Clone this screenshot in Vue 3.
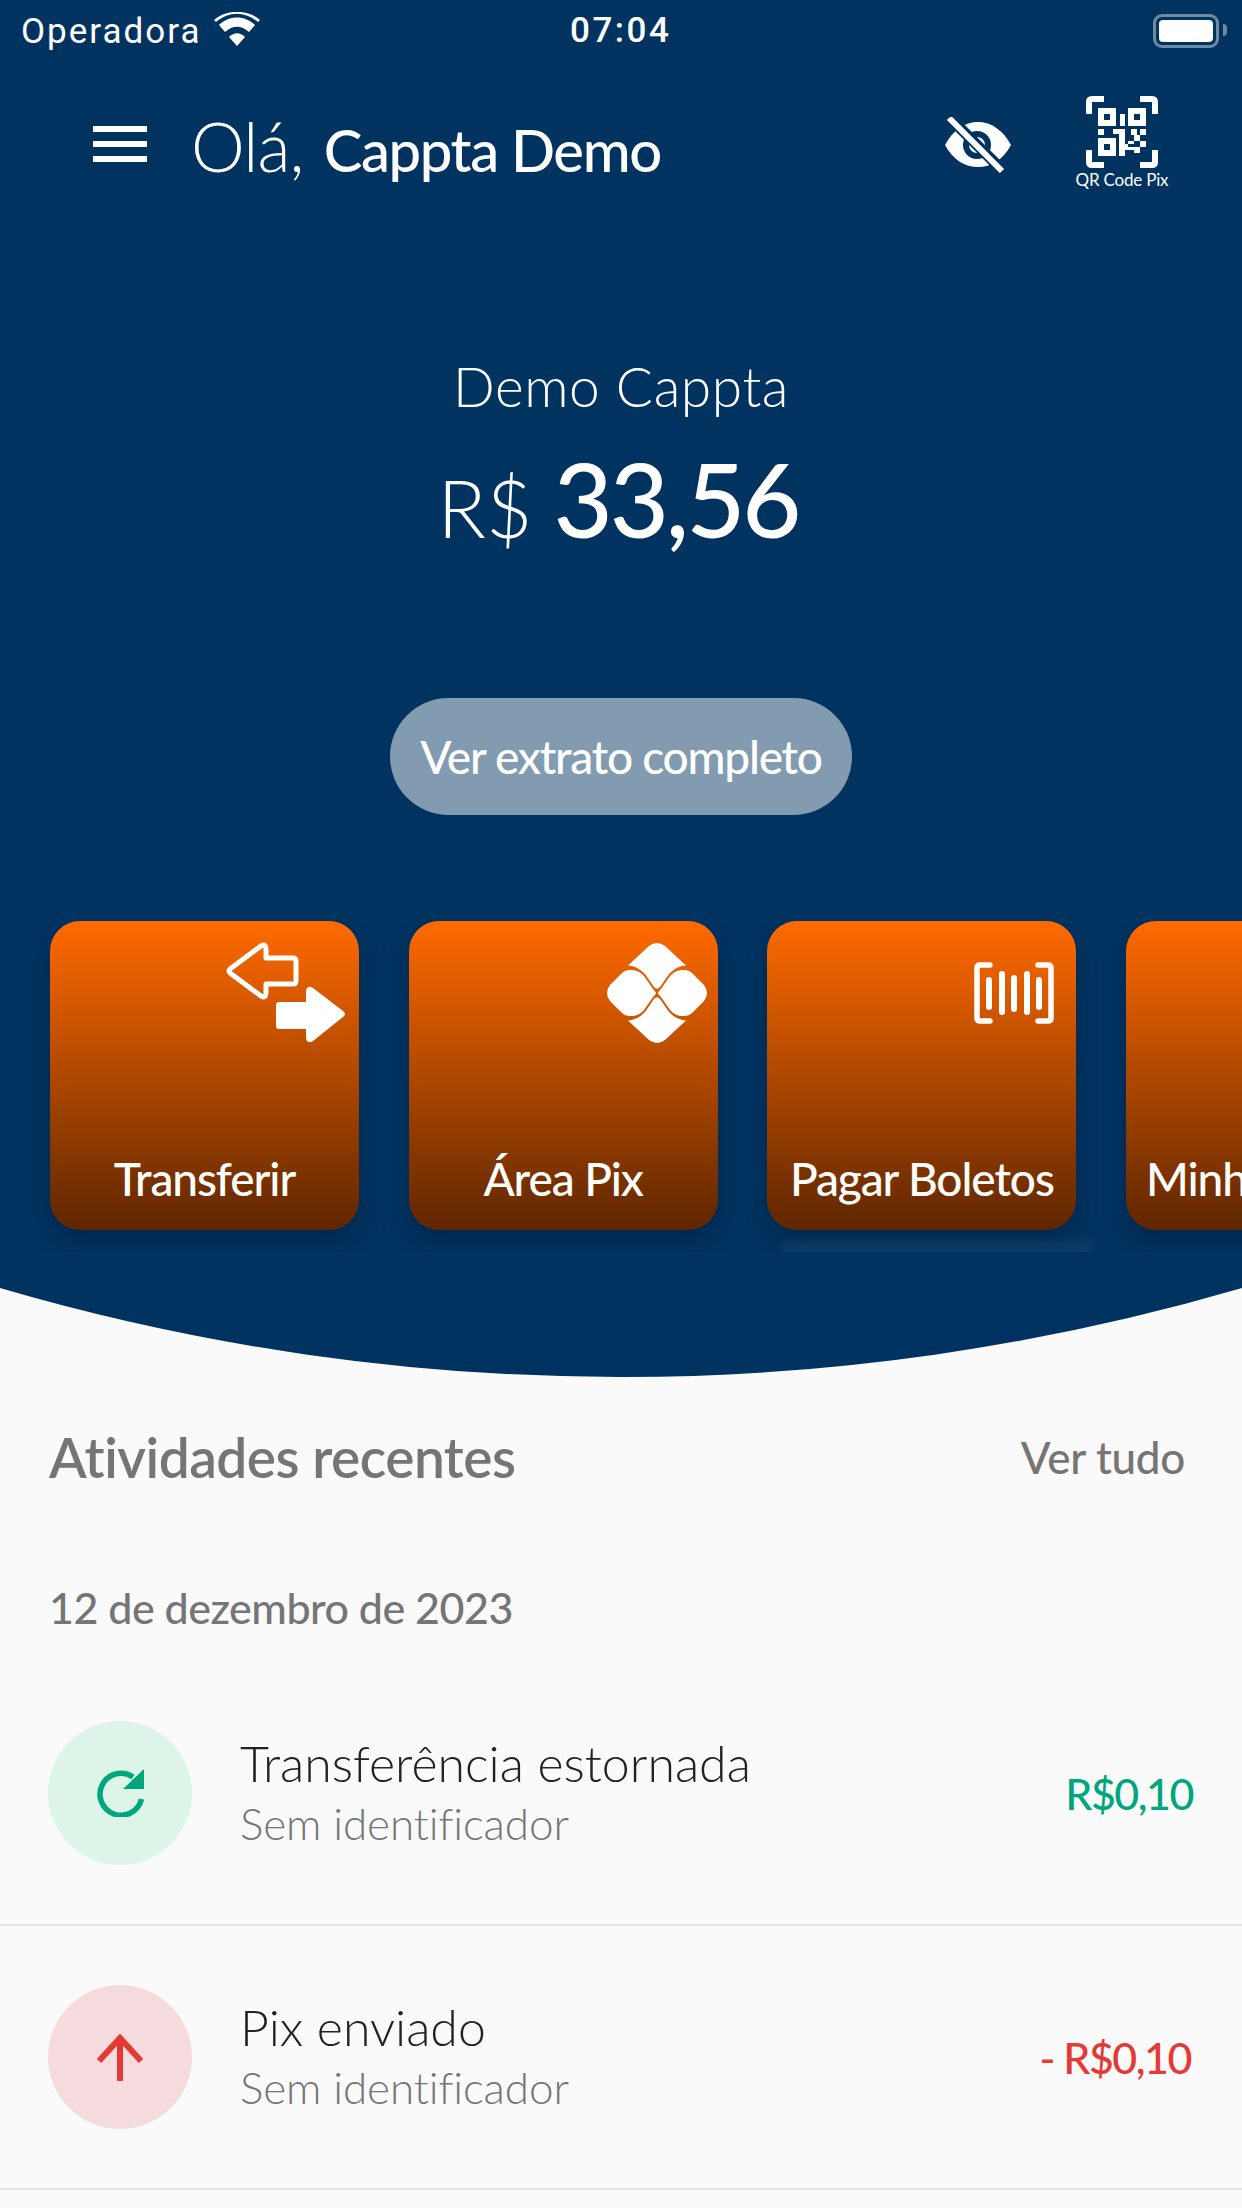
<script setup>
const cards = [
  { label: 'Transferir', icon: 'transfer' },
  { label: 'Área Pix', icon: 'pix' },
  { label: 'Pagar Boletos', icon: 'barcode' },
  { label: 'Minhas Chaves', icon: 'none' }
]
const rows = [
  { title: 'Transferência estornada', sub: 'Sem identificador', amount: 'R$0,10', kind: 'in' },
  { title: 'Pix enviado', sub: 'Sem identificador', amount: '- R$0,10', kind: 'out' }
]
</script>

<template>
  <div class="page">
    <section class="hero">
      <div class="status">
        <div class="status-left">
          <span>Operadora</span>
          <svg class="wifi" viewBox="0 0 46 34" width="46" height="34">
            <path fill="#fff" d="M23 34 15 25C20 20 26 20 31 25ZM11 20 5 13C15 3 31 3 41 13L35 20C27 13 19 13 11 20ZM2 10 0 8C12-3 34-3 46 8L44 10C31-1 15-1 2 10Z"/>
          </svg>
        </div>
        <span class="clock">07:04</span>
        <div class="battery"><i class="battery-fill"></i><b class="battery-tip"></b></div>
      </div>

      <header class="top">
        <div class="burger"><i></i><i></i><i></i></div>
        <div class="hello"><span class="hi">Olá,</span><span class="name">Cappta Demo</span></div>
        <svg class="eye" viewBox="0 0 66 56" width="66" height="56">
          <path fill="#fff" d="M0 28C8 13 20 5 33 5S58 13 66 28C58 43 46 50 33 50S8 43 0 28Z"/>
          <circle cx="32" cy="28" r="11" fill="none" stroke="#003360" stroke-width="6"/>
          <path d="M4 0 60 56" stroke="#003360" stroke-width="11"/>
          <path d="M4 1 57 54" stroke="#fff" stroke-width="6"/>
        </svg>
        <div class="qr">
          <svg viewBox="0 0 72 72" width="72" height="72">
            <path fill="none" stroke="#fff" stroke-width="6" stroke-linejoin="round" d="M3 18V6Q3 3 6 3H18M54 3H66Q69 3 69 6V18M3 54V66Q3 69 6 69H18M69 54V66Q69 69 66 69H54"/>
            <path fill="#fff" fill-rule="evenodd" d="M12 12H30V30H12ZM18 18V24H24V18ZM42 12H60V30H42ZM48 18V24H54V18ZM34 18H39V30H34ZM12 33H18V39H12ZM27 33H39V38H27ZM45 33H51V39H45ZM54 33H60V39H54ZM33 38H39V48H33ZM48 39H54V45H48ZM42 45H48V51H42ZM54 45H60V51H54ZM12 42H30V60H12ZM18 48V54H24V48ZM33 48H48V54H39V60H33ZM48 51H54V57H48Z"/>
          </svg>
          <span>QR Code Pix</span>
        </div>
      </header>

      <div class="balance">
        <p class="owner">Demo Cappta</p>
        <p class="money"><span class="cur">R$</span><span class="val">33,56</span></p>
        <button class="statement">Ver extrato completo</button>
      </div>

      <div class="cards-scroll">
        <div class="cards">
          <article v-for="c in cards" :key="c.label" class="card" :class="'card-' + c.icon">
            <svg v-if="c.icon === 'transfer'" class="ic ic-transfer" viewBox="0 0 122 102" width="122" height="102">
              <path fill="none" stroke="#fff" stroke-width="5" stroke-linejoin="round" d="M36 4Q41 1 41 8V16H68Q71 16 71 19V39Q71 42 68 42H41V50Q41 57 36 54L5 31Q3 29 5 27Z"/>
              <path fill="#fff" d="M88 46Q81 42 81 51V60H54Q51 60 51 63V84Q51 87 54 87H81V94Q81 103 88 99L118 75Q122 72 118 69Z"/>
            </svg>
            <svg v-else-if="c.icon === 'pix'" class="ic ic-pix" viewBox="0 0 100 100" width="100" height="100">
              <g fill="#fff">
                <path d="M21 22.5C28 23 33 26 38 31L47 44Q50 47.5 53 44L62 31C67 26 72 23 79 22.5L58 3Q50-3 42 3Z"/>
                <path transform="rotate(180 50 50)" d="M21 22.5C28 23 33 26 38 31L47 44Q50 47.5 53 44L62 31C67 26 72 23 79 22.5L58 3Q50-3 42 3Z"/>
                <path d="M3 42 15 30Q18 27 23 27C30 27 33 29 37 33L46 46Q49 49 49 50 49 51 46 54L37 67C33 71 30 73 23 73Q18 73 15 70L3 58Q-3 50 3 42Z"/>
                <path transform="rotate(180 50 50)" d="M3 42 15 30Q18 27 23 27C30 27 33 29 37 33L46 46Q49 49 49 50 49 51 46 54L37 67C33 71 30 73 23 73Q18 73 15 70L3 58Q-3 50 3 42Z"/>
              </g>
            </svg>
            <svg v-else-if="c.icon === 'barcode'" class="ic ic-barcode" viewBox="0 0 80 62" width="80" height="62">
              <g fill="none" stroke="#fff" stroke-linecap="round">
                <path stroke-width="5.5" d="M16 3H6Q3 3 3 6V56Q3 59 6 59H16M64 3H74Q77 3 77 6V56Q77 59 74 59H64"/>
                <path stroke-width="6" d="M15 18V45M28 12V50M40 16V47M53 12V50M65 18V45"/>
              </g>
            </svg>
            <span class="card-label">{{ c.label }}</span>
          </article>
        </div>
      </div>
    </section>

    <svg class="curve" viewBox="0 0 1242 89" width="1242" height="89">
      <path fill="#003360" d="M0 0H1242A2211 2211 0 0 1 0 0Z"/>
    </svg>

    <section class="activity">
      <div class="activity-head">
        <h2>Atividades recentes</h2>
        <a>Ver tudo</a>
      </div>
      <p class="date">12 de dezembro de 2023</p>
      <div v-for="r in rows" :key="r.title" class="row">
        <div class="badge" :class="r.kind">
          <svg v-if="r.kind === 'in'" viewBox="0 0 48 48" width="48" height="48">
            <path fill="none" stroke="#00a67c" stroke-width="5.5" d="M45.5 30A21 21 0 1 1 37 8"/>
            <path fill="#00a67c" d="M48 0V20H27Z"/>
          </svg>
          <svg v-else viewBox="0 0 46 47" width="46" height="47">
            <path fill="none" stroke="#e53935" stroke-width="6" d="M23 47V4M2 27 23 4 44 27"/>
          </svg>
        </div>
        <div class="row-text">
          <span class="row-title">{{ r.title }}</span>
          <span class="row-sub">{{ r.sub }}</span>
        </div>
        <span class="amount" :class="r.kind">{{ r.amount }}</span>
      </div>
    </section>
  </div>
</template>

<style>
html, body { margin: 0; background: #fafafa; }
</style>

<style scoped>
.page {
  width: 1242px;
  height: 2208px;
  overflow: hidden;
  background: #fafafa;
  font-family: "Lato", "Open Sans", sans-serif;
}
p, h2 { margin: 0; font-weight: inherit; }

.hero { background: #003360; height: 1288px; color: #fff; overflow: hidden; }

.status {
  height: 62px;
  padding: 0 16px 0 21px;
  position: relative;
  display: flex;
  justify-content: space-between;
  align-items: center;
  font-family: "Roboto", sans-serif;
  font-size: 35px;
}
.status-left { display: flex; align-items: center; gap: 13px; letter-spacing: 2px; }
.wifi { margin-top: -4px; }
.clock {
  position: absolute;
  left: 570px;
  top: 10px;
  font-weight: 500;
  letter-spacing: 2.5px;
}
.battery {
  width: 66px;
  height: 34px;
  box-sizing: border-box;
  border: 3px solid #6f8aa3;
  border-radius: 9px;
  padding: 3px;
  position: relative;
  margin-left: auto;
  margin-right: 7px;
}
.battery-fill { display: block; height: 100%; background: #fff; border-radius: 4px; }
.battery-tip {
  position: absolute;
  right: -11px;
  top: 7px;
  width: 4px;
  height: 12px;
  background: #6f8aa3;
  border-radius: 0 4px 4px 0;
}

.top {
  height: 140px;
  display: flex;
  align-items: flex-start;
  position: relative;
}
.burger { margin: 64px 0 0 93px; width: 54px; display: flex; flex-direction: column; gap: 9px; }
.burger i { display: block; height: 6px; background: #fff; }
.hello { margin: 49px 0 0 44px; display: flex; align-items: baseline; gap: 20px; line-height: 70px; }
.hi { font-size: 68px; font-weight: 300; letter-spacing: -.8px; }
.name { font-size: 58px; font-weight: 500; letter-spacing: -1.4px; }
.eye { position: absolute; left: 945px; top: 55px; }
.qr {
  position: absolute;
  left: 1064px;
  top: 34px;
  width: 116px;
  display: flex;
  flex-direction: column;
  align-items: center;
  font-size: 17px;
  letter-spacing: -.2px;
}
.qr svg { margin-bottom: 1px; }

.balance { display: flex; flex-direction: column; align-items: center; }
.owner { margin-top: 151px; font-size: 55px; font-weight: 300; line-height: 66px; letter-spacing: .6px; }
.money { margin: 24px 6px 0 0; display: flex; align-items: baseline; gap: 21px; line-height: 112px; }
.cur { font-size: 80px; font-weight: 300; }
.val { font-size: 102px; font-weight: 500; letter-spacing: -3px; }
.statement {
  margin-top: 135px;
  width: 462px;
  height: 117px;
  border: 0;
  border-radius: 59px;
  background: #829bb1;
  color: #fff;
  font: 500 46px "Lato", sans-serif;
  letter-spacing: -1.25px;
}

.cards-scroll { margin-top: 106px; height: 331px; overflow: hidden; }
.cards {
  padding-left: 50px;
  display: flex;
  gap: 49.7px;
  width: 1700px;
}
.card {
  flex: none;
  width: 309px;
  height: 309px;
  border-radius: 30px;
  background: linear-gradient(#ff6a00, #5f2600);
  box-shadow: 0 12px 20px rgba(0, 20, 50, .35);
  position: relative;
}
.card-label {
  position: absolute;
  top: 231px;
  left: 0;
  right: 0;
  text-align: center;
  font-size: 46px;
  font-weight: 500;
  letter-spacing: -1.1px;
  white-space: nowrap;
  line-height: 54px;
}
.card-none .card-label { left: 20px; text-align: left; }
.ic { position: absolute; }
.ic-transfer { left: 175px; top: 21px; }
.ic-pix { left: 198px; top: 22px; }
.ic-barcode { left: 207px; top: 41px; }
.card-barcode::after {
  content: "";
  position: absolute;
  left: 16px;
  right: -16px;
  top: 312px;
  height: 20px;
  background: linear-gradient(rgba(120, 160, 190, 0), rgba(120, 160, 190, .14));
  filter: blur(3px);
}

.curve { display: block; }

.activity { position: relative; }
.activity-head {
  padding: 45px 57px 0 49px;
  display: flex;
  justify-content: space-between;
  align-items: center;
  color: #757575;
  height: 70px;
}
.activity-head h2 { font-size: 55px; font-weight: 600; letter-spacing: -.5px; }
.activity-head a { font-size: 44px; font-weight: 500; letter-spacing: -.3px; }
.date { margin: 91px 0 29px 49px; color: #757575; font-size: 43px; font-weight: 500; line-height: 50px; letter-spacing: -.5px; }

.row {
  height: 264px;
  box-sizing: border-box;
  border-bottom: 2px solid #e4e4e4;
  display: flex;
  align-items: center;
  padding: 0 48px;
  position: relative;
}
.badge {
  width: 144px;
  height: 144px;
  border-radius: 50%;
  display: flex;
  align-items: center;
  justify-content: center;
  flex: none;
}
.badge.in { background: #ddf4e8; }
.badge.out { background: #f5dbdd; }
.row-text { margin-left: 48px; display: flex; flex-direction: column; flex: 1; }
.row-title { font-size: 50px; font-weight: 300; color: #222; line-height: 60px; }
.row-sub { font-size: 44px; font-weight: 300; color: #757575; line-height: 60px; letter-spacing: -.1px; }
.amount { font-size: 43px; font-weight: 500; letter-spacing: -1.5px; margin-right: 1px; }
.amount.in { color: #00a67c; }
.amount.out { color: #e53935; margin-right: 3px; }
</style>
